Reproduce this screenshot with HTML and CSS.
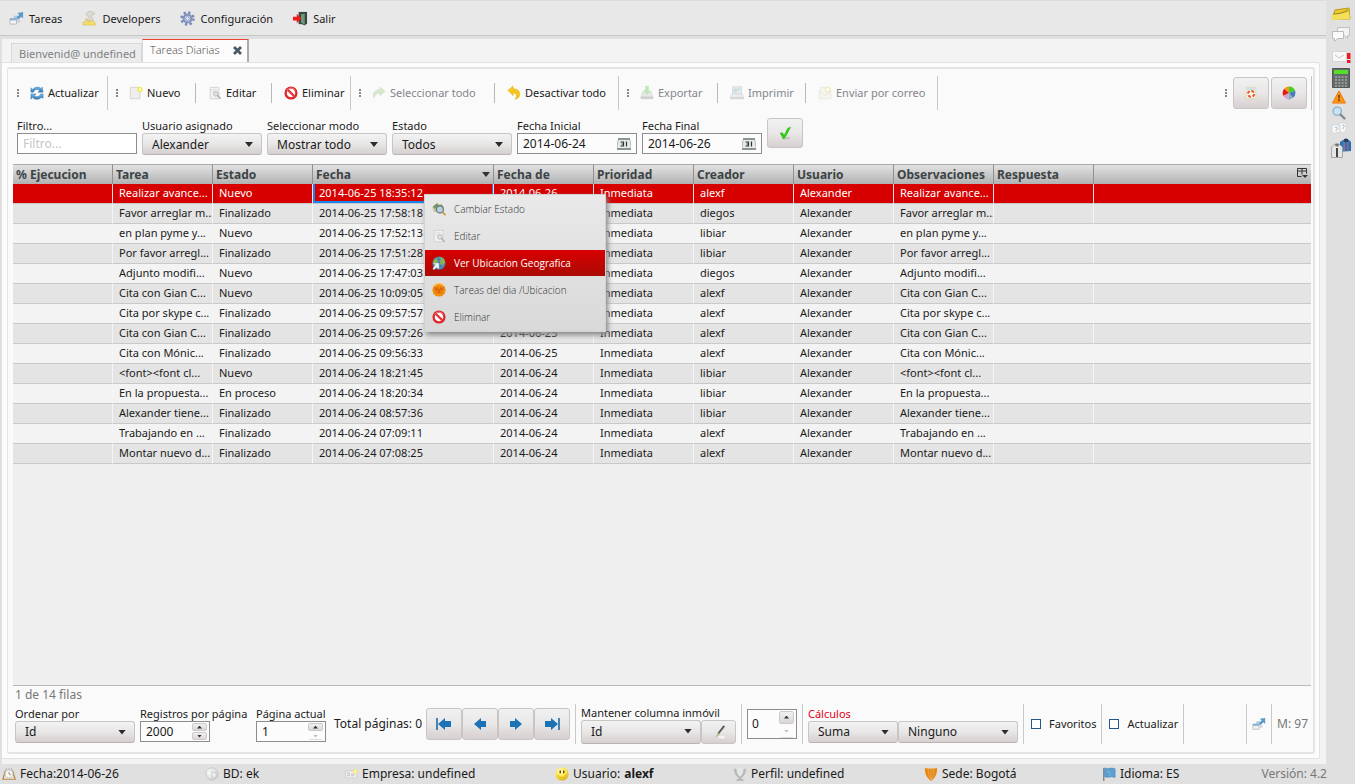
FILE: index.html
```html
<!DOCTYPE html>
<html lang="es">
<head>
<meta charset="utf-8">
<title>Tareas Diarias</title>
<link rel="stylesheet" href="styles.css">
</head>
<body>
<svg class="sprite" aria-hidden="true">
  <defs>
    <linearGradient id="g-blue" x1="0" y1="0" x2="0" y2="1"><stop offset="0" stop-color="#7db9e2"/><stop offset="1" stop-color="#2c76b4"/></linearGradient>
    <linearGradient id="g-gray" x1="0" y1="0" x2="1" y2="1"><stop offset="0" stop-color="#fff"/><stop offset="1" stop-color="#c2c2c2"/></linearGradient>
    <linearGradient id="g-coat" x1="0" y1="0" x2="1" y2="0"><stop offset="0" stop-color="#2b5f97"/><stop offset=".5" stop-color="#4f93cf"/><stop offset="1" stop-color="#2b62a0"/></linearGradient>
    <radialGradient id="g-smile" cx=".4" cy=".3" r=".8"><stop offset="0" stop-color="#fffbd0"/><stop offset=".5" stop-color="#ffe640"/><stop offset="1" stop-color="#c9a216"/></radialGradient>
  </defs>
  <symbol id="task" viewBox="0 0 16 16"><path d="M5 5h5v5H5z" fill="#aacbe4"/><path d="M1 8h7v6H1z" fill="#f0f2f4" stroke="#b5bdc4"/><path d="M1 8h7v2H1z" fill="#89aecb"/><path d="M15 1v7l-2-2-3 3-2-2 3-3-2-2z" fill="#5a9acb"/><path d="M9 11l3-2v2l-3 2z" fill="#c4ccd2"/></symbol>
  <symbol id="dev" viewBox="0 0 16 16"><path d="M7 0l5 1 2 2-3 1-1 2 2 3-2 3-4-1 2-3-2-3-2-1z" fill="#dcdad1" stroke="#b8b4a4" stroke-width=".6"/><path d="M1 12l4-2 8 1 2 4H1z" fill="#f3dd6c" stroke="#d3b63c" stroke-width=".5"/><path d="M4 8l4 4" stroke="#d9ca86" stroke-width="2"/></symbol>
  <symbol id="gear" viewBox="0 0 16 16"><circle cx="8" cy="8" r="6.4" fill="none" stroke="#7788b4" stroke-width="2.6" stroke-dasharray="2.5 2.53"/><circle cx="8" cy="8" r="4.2" fill="#cfd8ee" stroke="#8292bd" stroke-width="2.4"/><circle cx="8" cy="8" r="1.8" fill="#f1f3f8" stroke="#7181aa" stroke-width=".7"/></symbol>
  <symbol id="exit" viewBox="0 0 16 16"><path d="M6 1h9v13H6z" fill="#404642"/><path d="M8 3l5-1v13l-5-2z" fill="#709779" stroke="#253a2b" stroke-width=".8"/><path d="M0 6h4V3l5 5-5 5v-3H0z" fill="#ee1b20"/></symbol>
  <symbol id="refresh" viewBox="0 0 16 16"><path d="M1 7V2l2 2c3-4 8-3 10-1l1-2 1 6H9l2-2C8 3 5 4 4 7z" fill="url(#g-blue)" stroke="#397fb5" stroke-width=".5"/><path d="M15 9v5l-2-1c-3 3-8 3-10 0l-2 2V9h6l-2 2c3 2 6 1 7-2z" fill="url(#g-blue)" stroke="#397fb5" stroke-width=".5"/></symbol>
  <symbol id="new" viewBox="0 0 16 16"><path d="M1.500 1.500h11v13h-11z" fill="#eeeeec" stroke="#d2d2d0"/><circle cx="12.500" cy="4" r="2.200" fill="#fff" stroke="#f0ea55" stroke-width="1.800"/></symbol>
  <symbol id="edit" viewBox="0 0 16 16"><path d="M2.500 1.500h10v13h-10z" fill="#f2f2f2" stroke="#d0d0d0"/><path d="M4 4h6M4 6h6" stroke="#ddd"/><circle cx="9" cy="9" r="2.600" fill="#e2e2e2" stroke="#b4b4b4"/><path d="M10.500 10.500l4 4" stroke="#b0b0b0" stroke-width="1.800"/></symbol>
  <symbol id="ban" viewBox="0 0 16 16"><circle cx="8" cy="8" r="6.200" fill="#fff" stroke="#dd252a" stroke-width="2.600"/><path d="M3.800 3.800l8.400 8.400" stroke="#e43a3c" stroke-width="2.600"/><path d="M3 5a6 6 0 0 1 10 0" fill="none" stroke="#ff9999" stroke-width=".8"/></symbol>
  <symbol id="redo" viewBox="0 0 16 16"><path d="M2 14C0 8 4 4 9 4V1l6 5-6 5V8C6 8 3 10 2 14z" fill="#d6e6cb" stroke="#cbdac0" stroke-width=".5"/></symbol>
  <symbol id="undo" viewBox="0 0 16 16"><path d="M1 5l6-5v3c6 0 9 4 7 9-1 2-3 3-5 3 3-3 2-7-2-7v3z" fill="#f5c71b" stroke="#d9a514" stroke-width=".5"/></symbol>
  <symbol id="export" viewBox="0 0 16 16"><path d="M3 7h10l2 7H1z" fill="#e8e8e8" stroke="#d0d0d0" stroke-width=".6"/><path d="M1 12h14v3H1z" fill="#cfcfcf"/><path d="M6 0h4v5h3l-5 5-5-5h3z" fill="#c0e5ba"/></symbol>
  <symbol id="print" viewBox="0 0 16 16"><path d="M3 1h10v8H3z" fill="#eef1f3" stroke="#cdd5da"/><circle cx="6" cy="5" r="2.500" fill="#cddbe5"/><path d="M8 2h4v4H8z" fill="#d9e2e8"/><path d="M2 9h12l2 4H0z" fill="#ececec" stroke="#d2d2d2" stroke-width=".6"/><path d="M0 13h16v2H0z" fill="#d4d4d4"/></symbol>
  <symbol id="mail" viewBox="0 0 16 16"><path d="M1.500 5.500l2-4h8l3 3v10h-13z" fill="#f5f5ee" stroke="#e6e6de"/><path d="M2 6l6 5 6-5" fill="none" stroke="#e5e5e1"/><circle cx="11" cy="4" r="2.500" fill="#fff" stroke="#f2edb8" stroke-width="1.500"/></symbol>
  <symbol id="first" viewBox="0 0 18 16"><path d="M2 2v12" stroke="#1f6ba8" stroke-width="1.600"/><path d="M3 8l7-6v3h6v6h-6v3z" fill="#1b73b5"/></symbol>
  <symbol id="prev" viewBox="0 0 18 16"><path d="M3 8l7-6v3h5v6h-5v3z" fill="#1b73b5"/></symbol>
  <symbol id="cal" viewBox="0 0 14 12"><path d="M1 1h12v7l1 3H0l1-3z" fill="#e9ebeb"/><path d="M1 0h12v2H1zM0 10h14v2H0z" fill="#8c9596"/><path d="M0 10l1-8M14 10l-1-8" stroke="#a3a9aa" stroke-width=".8"/><path d="M3.500 4h3v4h-3M4.500 6h2M9.500 3.500v5" fill="none" stroke="#333" stroke-width="1.200"/></symbol>
  <symbol id="check" viewBox="0 0 16 16"><ellipse cx="9" cy="14" rx="5" ry="1.500" fill="#c6c3c3"/><path d="M2 8l3-1 2 3 4-8 4-1-7 13-2 1z" fill="#38c71d"/></symbol>
  <symbol id="sheet" viewBox="0 0 16 16"><path d="M2.500 1.500h11v13h-11z" fill="#faf7dc" stroke="#d9d6b9"/><path d="M3 2h10v3H3z" fill="#cee3e6"/><circle cx="8" cy="9" r="3.500" fill="none" stroke="#e25a42" stroke-width="2.400" stroke-dasharray="3.500 2"/></symbol>
  <symbol id="pie" viewBox="0 0 16 16"><path d="M8 8L2.500 3A7.500 7.500 0 0 1 8 .5z" fill="#f49b14"/><path d="M8 8V.5a7.500 7.500 0 0 1 7 5z" fill="#46cf29"/><path d="M8 8l7-2.500a7.500 7.500 0 0 1-2.500 8z" fill="#407fbc"/><path d="M8 8l4.500 5.500A7.500 7.500 0 0 1 7 15.500z" fill="#85a9cf"/><path d="M8 8l-1 7.500A7.500 7.500 0 0 1 1.500 11z" fill="#d6a5cc"/><path d="M8 8l-6.500 3A7.500 7.500 0 0 1 2.500 3z" fill="#e01f1b"/></symbol>
  <symbol id="find" viewBox="0 0 16 16"><path d="M0 6l5-4 7 1 2 5-6 4-6-1z" fill="#cfc7a5"/><path d="M1 5l5-4 2 3-5 4z" fill="#74996b"/><path d="M4 10l7-7" stroke="#b2a77c" stroke-width="2"/><circle cx="9" cy="8.500" r="4" fill="#b8d0de" stroke="#62717a" stroke-width="1.300"/><path d="M12 11.500l3.500 3.500" stroke="#c99b49" stroke-width="2"/></symbol>
  <symbol id="globe" viewBox="0 0 16 16"><circle cx="8" cy="8" r="7.500" fill="#4a85b9"/><path d="M8 1c4 0 7 3 7 6l-3 4-3-3 1-4zM1 6l4-4 2 4-3 5-2-1z" fill="#8fb14b"/><path d="M1 14l3-4-3-2h7v7l-3-2-3 3z" fill="#eef7fa" stroke="#8caab8" stroke-width=".6"/></symbol>
  <symbol id="foursq" viewBox="0 0 16 16"><circle cx="8" cy="8" r="7.500" fill="#f28a0b"/><path d="M3 5l2 4 1-4 2 5 2-5 1 4 2-4M5 11h6" fill="none" stroke="#d45409"/><path d="M2 4a7 7 0 0 1 12 0" fill="none" stroke="#ffc35a" stroke-width="1.500"/></symbol>
  <symbol id="pen" viewBox="0 0 16 16"><ellipse cx="11" cy="14" rx="4" ry="1.500" fill="#f3f3f3"/><path d="M14 1L7 10" stroke="#555c50" stroke-width="2.200"/><path d="M7 9l2 1.500L3 15z" fill="#a8bf85"/></symbol>
  <symbol id="cols" viewBox="0 0 11 11"><path d="M4.500 8.500h-4v-8h9v5M.5 3h9M5 .5v6" fill="none" stroke="#333"/><path d="M5 7h6l-3 3z" fill="#333"/></symbol>
  <symbol id="clock" viewBox="0 0 16 16"><path d="M4 4L1 14h14L12 4" fill="#eee8df" stroke="#b98743" stroke-width="1.400"/><circle cx="8" cy="8" r="4.500" fill="#f8f8f6" stroke="#c5c5c5"/><path d="M8 6v2l2 1" fill="none" stroke="#777"/><path d="M5 1v3M8 1v2M11 1v3" stroke="#b8bec0" stroke-width="1.500"/></symbol>
  <symbol id="disc" viewBox="0 0 16 16"><circle cx="8" cy="8" r="7" fill="url(#g-gray)" stroke="#c4c4c4"/><circle cx="10" cy="9" r="3" fill="#ededed" stroke="#c9c9c9"/><path d="M2 4l5 3-1 6" fill="#fff" opacity=".6"/></symbol>
  <symbol id="card" viewBox="0 0 16 16"><path d="M1.500 4.500h13v8h-13z" fill="#f3f3f2" stroke="#ccc"/><path d="M3 7h3v3H3M8 8h4M8 10h4" fill="none" stroke="#b5b5b5"/><circle cx="13" cy="5" r="2" fill="#fffcb0" stroke="#f2e640"/></symbol>
  <symbol id="smile" viewBox="0 0 16 16"><circle cx="8" cy="8" r="7.500" fill="url(#g-smile)"/><path d="M6 4v3M10 4v3" stroke="#463a13" stroke-width="1.500"/><path d="M3.500 9c2 4 7 4 9 0" fill="none" stroke="#d4a91f"/></symbol>
  <symbol id="shield" viewBox="0 0 16 16"><path d="M1 1c5 1 9 1 14 0 0 6-1 10-7 15C2 11 1 7 1 1z" fill="currentColor"/><path d="M5 2c0 5 0 8 3 12 3-4 3-7 3-12M8 2v13" fill="none" stroke="#fff" stroke-opacity=".25"/></symbol>
  <symbol id="urn" viewBox="0 0 16 16"><path d="M1 2h14c0 5-2 8-5 10v2h2v2H4v-2h2v-2C3 10 1 7 1 2z" fill="#b9b9b9"/><path d="M4 1h8c0 5-1 8-4 10C5 9 4 6 4 1z" fill="#e6e6e6"/></symbol>
  <symbol id="flag" viewBox="0 0 16 16"><path d="M2 1v15" stroke="#788a98" stroke-width="1.600"/><path d="M3 1c4 2 7-1 12 1v10c-5-2-8 1-12-1z" fill="#5d9fd1" stroke="#4383b5" stroke-width=".6"/><path d="M6 5l3 1v4" fill="none" stroke="#82bce3"/></symbol>
  <symbol id="folder" viewBox="0 0 20 14"><path d="M1 12L4 3l14-2 1 11z" fill="#e9c92e" stroke="#bd9b16"/><path d="M1 7l17-2 1 7-18 1z" fill="#f6df58"/><path d="M2 7c5 0 11-1 15-4" fill="none" stroke="#94832d"/></symbol>
  <symbol id="chat" viewBox="0 0 20 16"><path d="M6.500 1.500h12v8h-2v3l-3-3h-7z" fill="#f3f3f3" stroke="#c0c0c0"/><path d="M1.500 5.500h11v7h-6l-3 3v-3h-2z" fill="#fafafa" stroke="#bbb"/></symbol>
  <symbol id="alertmail" viewBox="0 0 20 14"><path d="M1.500 1.500h14v10h-14z" fill="#f8f8f6" stroke="#d5d5d3"/><path d="M4 5l4 3 5-3" fill="none" stroke="#c6c6c6"/><path d="M16 3h3.500v6H16zM16 10h3.500v3H16z" fill="#ed1c24"/></symbol>
  <symbol id="calc" viewBox="0 0 18 20"><path d="M.5.5h17v19H.5z" fill="#656b6a" stroke="#555"/><path d="M2 2h14v4H2z" fill="#52de29"/><path d="M3 9h12M3 12h12M3 15h12M3 18h12" stroke="#a2a8a6" stroke-width="1.500" stroke-dasharray="2 1.300"/></symbol>
  <symbol id="warn" viewBox="0 0 16 15"><path d="M8 1l7 13H1z" fill="#ff9518" stroke="#ed7708" stroke-linejoin="round"/><path d="M8 5v4M8 10v2" stroke="#513300" stroke-width="1.400"/></symbol>
  <symbol id="lens" viewBox="0 0 16 16"><circle cx="6" cy="6" r="4.800" fill="#c8e2f4" stroke="#8eb1cb" stroke-width="1.500"/><path d="M9 9l6 6" stroke="#818b92" stroke-width="2.500"/></symbol>
  <symbol id="ask" viewBox="0 0 16 14"><path d="M1 3h8v8l-3-1-3 2-2-3zM8 1h7v8l-4 2-3-3z" fill="#f8f8f8" stroke="#d0d0d0" stroke-width=".7"/><path d="M4 6c1-2 4 0 1 2v1M11 4c1-2 4 0 1 2v1" fill="none" stroke="#9bbdd5"/></symbol>
  <symbol id="people" viewBox="0 0 20 20"><path d="M9 14V4l3-2h6l2 2v9z" fill="url(#g-coat)"/><ellipse cx="15" cy="2.500" rx="2.500" ry="2" fill="#27405f"/><path d="M14 5h2v8h-2z" fill="#85517a"/><path d="M.5 19.500V9L4 6h4l3.500 3v10.500z" fill="#e5e5e5" stroke="#999" stroke-width=".8"/><path d="M5 10h2v9H5z" fill="#444"/><ellipse cx="6" cy="7" rx="2" ry="1.600" fill="#777"/></symbol>
</svg>

<div class="app">
  <div class="main">
    <nav class="menubar">
      <button class="menu"><svg class="icon"><use href="#task"/></svg>Tareas</button>
      <button class="menu"><svg class="icon"><use href="#dev"/></svg>Developers</button>
      <button class="menu"><svg class="icon"><use href="#gear"/></svg>Configuración</button>
      <button class="menu"><svg class="icon"><use href="#exit"/></svg>Salir</button>
    </nav>
    <div class="workspace">
      <div class="tabs">
        <button class="tab">Bienvenid@ undefined</button>
        <div class="tab tab-active"><span>Tareas Diarias</span><button class="close" aria-label="Cerrar"><svg viewBox="0 0 9 9"><path d="M1 1l7 7M8 1l-7 7" stroke="#4c5a66" stroke-width="2.800"/></svg></button></div>
      </div>
      <div class="panel"><div class="panel-inner">
        <div class="toolbar">
          <div class="tool tall"><i class="grip"></i><button><svg class="icon"><use href="#refresh"/></svg>Actualizar</button></div>
          <div class="tool"><i class="grip"></i><button><svg class="icon"><use href="#new"/></svg>Nuevo</button></div>
          <div class="tool"><button><svg class="icon"><use href="#edit"/></svg>Editar</button></div>
          <div class="tool tall"><button><svg class="icon"><use href="#ban"/></svg>Eliminar</button></div>
          <div class="tool"><i class="grip"></i><button disabled><svg class="icon"><use href="#redo"/></svg>Seleccionar todo</button></div>
          <div class="tool tall"><button><svg class="icon"><use href="#undo"/></svg>Desactivar todo</button></div>
          <div class="tool"><i class="grip"></i><button disabled><svg class="icon"><use href="#export"/></svg>Exportar</button></div>
          <div class="tool"><button disabled><svg class="icon"><use href="#print"/></svg>Imprimir</button></div>
          <div class="tool tall"><button disabled><svg class="icon"><use href="#mail"/></svg>Enviar por correo</button></div>
          <div class="tool tall tool-end"><i class="grip"></i><button class="push" aria-label="Hoja"><svg class="icon"><use href="#sheet"/></svg></button><button class="push" aria-label="Gráfico"><svg class="icon"><use href="#pie"/></svg></button></div>
        </div>
        <div class="filters">
          <label class="field">Filtro...<input class="box" type="text" placeholder="Filtro..."></label>
          <label class="field">Usuario asignado<span class="pick"><select><option>Alexander</option></select></span></label>
          <label class="field">Seleccionar modo<span class="pick"><select><option>Mostrar todo</option></select></span></label>
          <label class="field">Estado<span class="pick"><select><option>Todos</option></select></span></label>
          <label class="field">Fecha Inicial<span class="box date"><input type="text" value="2014-06-24"><svg><use href="#cal"/></svg></span></label>
          <label class="field">Fecha Final<span class="box date"><input type="text" value="2014-06-26"><svg><use href="#cal"/></svg></span></label>
          <button class="push apply" aria-label="Aplicar"><svg class="icon"><use href="#check"/></svg></button>
        </div>
        <div class="grid">
          <table>
            <colgroup><col class="c"><col class="c"><col class="c"><col class="c-wide"><col class="c"><col class="c"><col class="c"><col class="c"><col class="c"><col class="c"><col></colgroup>
            <thead><tr><th>% Ejecucion</th><th>Tarea</th><th>Estado</th><th><span class="sorted">Fecha</span></th><th>Fecha de</th><th>Prioridad</th><th>Creador</th><th>Usuario</th><th>Observaciones</th><th>Respuesta</th><th><button class="columns" aria-label="Columnas"><svg><use href="#cols"/></svg></button></th></tr></thead>
            <tbody>
              <tr class="selected"><td></td><td>Realizar avance...</td><td>Nuevo</td><td class="focus">2014-06-25 18:35:12</td><td>2014-06-26</td><td>Inmediata</td><td>alexf</td><td>Alexander</td><td>Realizar avance...</td><td></td><td></td></tr>
              <tr><td></td><td>Favor arreglar m...</td><td>Finalizado</td><td>2014-06-25 17:58:18</td><td>2014-06-25</td><td>Inmediata</td><td>diegos</td><td>Alexander</td><td>Favor arreglar m...</td><td></td><td></td></tr>
              <tr><td></td><td>en plan pyme y...</td><td>Nuevo</td><td>2014-06-25 17:52:13</td><td>2014-06-25</td><td>Inmediata</td><td>libiar</td><td>Alexander</td><td>en plan pyme y...</td><td></td><td></td></tr>
              <tr><td></td><td>Por favor arregl...</td><td>Finalizado</td><td>2014-06-25 17:51:28</td><td>2014-06-25</td><td>Inmediata</td><td>libiar</td><td>Alexander</td><td>Por favor arregl...</td><td></td><td></td></tr>
              <tr><td></td><td>Adjunto modifi...</td><td>Nuevo</td><td>2014-06-25 17:47:03</td><td>2014-06-25</td><td>Inmediata</td><td>diegos</td><td>Alexander</td><td>Adjunto modifi...</td><td></td><td></td></tr>
              <tr><td></td><td>Cita con Gian C...</td><td>Nuevo</td><td>2014-06-25 10:09:05</td><td>2014-06-25</td><td>Inmediata</td><td>alexf</td><td>Alexander</td><td>Cita con Gian C...</td><td></td><td></td></tr>
              <tr><td></td><td>Cita por skype c...</td><td>Finalizado</td><td>2014-06-25 09:57:57</td><td>2014-06-25</td><td>Inmediata</td><td>alexf</td><td>Alexander</td><td>Cita por skype c...</td><td></td><td></td></tr>
              <tr><td></td><td>Cita con Gian C...</td><td>Finalizado</td><td>2014-06-25 09:57:26</td><td>2014-06-25</td><td>Inmediata</td><td>alexf</td><td>Alexander</td><td>Cita con Gian C...</td><td></td><td></td></tr>
              <tr><td></td><td>Cita con Mónic...</td><td>Finalizado</td><td>2014-06-25 09:56:33</td><td>2014-06-25</td><td>Inmediata</td><td>alexf</td><td>Alexander</td><td>Cita con Mónic...</td><td></td><td></td></tr>
              <tr><td></td><td>&lt;font&gt;&lt;font cl...</td><td>Nuevo</td><td>2014-06-24 18:21:45</td><td>2014-06-24</td><td>Inmediata</td><td>libiar</td><td>Alexander</td><td>&lt;font&gt;&lt;font cl...</td><td></td><td></td></tr>
              <tr><td></td><td>En la propuesta...</td><td>En proceso</td><td>2014-06-24 18:20:34</td><td>2014-06-24</td><td>Inmediata</td><td>libiar</td><td>Alexander</td><td>En la propuesta...</td><td></td><td></td></tr>
              <tr><td></td><td>Alexander tiene...</td><td>Finalizado</td><td>2014-06-24 08:57:36</td><td>2014-06-24</td><td>Inmediata</td><td>libiar</td><td>Alexander</td><td>Alexander tiene...</td><td></td><td></td></tr>
              <tr><td></td><td>Trabajando en ...</td><td>Finalizado</td><td>2014-06-24 07:09:11</td><td>2014-06-24</td><td>Inmediata</td><td>alexf</td><td>Alexander</td><td>Trabajando en ...</td><td></td><td></td></tr>
              <tr><td></td><td>Montar nuevo d...</td><td>Finalizado</td><td>2014-06-24 07:08:25</td><td>2014-06-24</td><td>Inmediata</td><td>alexf</td><td>Alexander</td><td>Montar nuevo d...</td><td></td><td></td></tr>
            </tbody>
          </table>
          <div class="context" role="menu">
            <button role="menuitem"><svg class="icon"><use href="#find"/></svg>Cambiar Estado</button>
            <button role="menuitem"><svg class="icon"><use href="#edit"/></svg>Editar</button>
            <button role="menuitem" class="hot"><svg class="icon"><use href="#globe"/></svg>Ver Ubicacion Geografica</button>
            <button role="menuitem"><svg class="icon"><use href="#foursq"/></svg>Tareas del dia /Ubicacion</button>
            <button role="menuitem"><svg class="icon"><use href="#ban"/></svg>Eliminar</button>
          </div>
        </div>
        <div class="count">1 de 14 filas</div>
        <div class="pager">
          <label class="field w-pick">Ordenar por<span class="pick"><select><option>Id</option></select></span></label>
          <div class="field w-size"><label for="size">Registros por página</label><span class="box spin"><input id="size" type="number" value="2000"><span class="steps"><button class="up" aria-label="Más"></button><button class="down" aria-label="Menos"></button></span></span></div>
          <div class="field w-page"><label for="page">Página actual</label><span class="box spin"><input id="page" type="number" value="1"><span class="steps"><button class="up" aria-label="Más"></button><button class="down" disabled aria-label="Menos"></button></span></span></div>
          <span class="total">Total páginas: 0</span>
          <div class="nav">
            <button class="push" aria-label="Primera"><svg><use href="#first"/></svg></button>
            <button class="push" aria-label="Anterior"><svg><use href="#prev"/></svg></button>
            <button class="push" aria-label="Siguiente"><svg class="flip"><use href="#prev"/></svg></button>
            <button class="push" aria-label="Última"><svg class="flip"><use href="#first"/></svg></button>
          </div>
          <div class="group"><div class="field"><label for="keep">Mantener columna inmóvil</label><div class="pair"><span class="pick tallpick"><select id="keep"><option>Id</option></select></span><button class="push brush" aria-label="Aplicar columna"><svg class="icon"><use href="#pen"/></svg></button></div></div></div>
          <div class="group"><span class="box spin bigspin"><input type="number" value="0" aria-label="Columnas"><span class="steps"><button class="up" aria-label="Más"></button><button class="down" disabled aria-label="Menos"></button></span></span></div>
          <div class="group"><div class="field"><label class="red" for="op">Cálculos</label><div class="pair"><span class="pick short"><select id="op"><option>Suma</option></select></span><span class="pick"><select aria-label="Columna"><option>Ninguno</option></select></span></div></div></div>
          <div class="group"><label class="tick"><input type="checkbox">Favoritos</label></div>
          <div class="group"><label class="tick"><input type="checkbox">Actualizar</label></div>
          <div class="group grow"></div>
          <div class="group"><svg class="icon"><use href="#task"/></svg></div>
          <div class="group mem">M: 97</div>
        </div>
      </div></div>
    </div>
  </div>
  <aside class="side">
    <svg class="s14"><use href="#folder"/></svg>
    <svg class="s16"><use href="#chat"/></svg>
    <svg class="s14 gap"><use href="#alertmail"/></svg>
    <svg class="s20"><use href="#calc"/></svg>
    <svg class="s14 narrow"><use href="#warn"/></svg>
    <svg class="s14 narrow"><use href="#lens"/></svg>
    <svg class="s14 narrow"><use href="#ask"/></svg>
    <svg class="s20"><use href="#people"/></svg>
  </aside>
</div>
<footer class="status">
  <span><svg class="icon"><use href="#clock"/></svg>Fecha:2014-06-26</span>
  <span><svg class="icon"><use href="#disc"/></svg>BD: ek</span>
  <span><svg class="icon"><use href="#card"/></svg>Empresa: undefined</span>
  <span><svg class="icon"><use href="#smile"/></svg>Usuario: <b>alexf</b></span>
  <span><svg class="icon"><use href="#urn"/></svg>Perfil: undefined</span>
  <span><svg class="icon gold"><use href="#shield"/></svg>Sede: Bogotá</span>
  <span><svg class="icon"><use href="#flag"/></svg>Idioma: ES</span>
  <span class="version">Versión: 4.2</span>
</footer>
</body>
</html>
```
FILE: styles.css
```css
* { box-sizing: border-box; }
body {
  margin: 0;
  min-height: 100vh;
  display: flex;
  flex-direction: column;
  background: #e0e0e0;
  color: #1a1a1a;
  font: 12px/16px "Noto Sans", "Open Sans", sans-serif;
}
button, input, select { font: inherit; color: inherit; margin: 0; }
button { background: none; border: 0; padding: 0; }
.sprite { position: absolute; width: 0; height: 0; }
.icon { width: 14px; height: 14px; flex: none; }

.app { flex: 1; display: flex; }
.main { flex: 1; min-width: 0; display: flex; flex-direction: column; }
.menubar {
  height: 36px;
  display: flex;
  align-items: center;
  gap: 20px;
  padding: 1px 9px 0;
  background: #e8e8e8;
  border-top: 1px solid #dcdcdc;
  border-bottom: 1px solid #c6c6c6;
  font-size: 11px;
}
.menu { display: flex; align-items: center; gap: 5px; }
.menu .icon { width: 15px; height: 15px; }

.workspace {
  flex: 1;
  margin: 3px 0 0 2px;
  padding-right: 6px;
  padding-bottom: 5px;
  background: #f3f3f3;
  display: flex;
  flex-direction: column;
}
.tabs { display: flex; align-items: flex-end; height: 23px; padding-left: 9px; }
.tab { height: 19px; padding: 2px 0 0 7px; width: 131px; background: #ececec; border: 1px solid #d8d8d8; border-bottom: 0; color: #7d8287; text-align: left; white-space: nowrap; font-size: 11px; line-height: 16px; }
.tab-active { display: flex; justify-content: space-between; align-items: center; width: 107px; height: 23px; padding: 0 5px 2px 7px; background: #fcfcfc; border-top: 1px solid #ee4030; border-right: 2px solid #aaa; font: 300 11px/16px "Open Sans", sans-serif; color: #444; }
.close { width: 9px; height: 9px; display: flex; }

.panel { flex: 1; display: flex; background: #fcfcfc; border: 1px solid #e2e2e2; border-left: 0; border-radius: 0 3px 3px 0; padding: 4px 4px 4px 5px; }
.panel-inner { flex: 1; min-width: 0; display: flex; flex-direction: column; background: #fafafa; border: 2px solid #e4e4e4; border-left-width: 1px; border-radius: 3px; padding: 7px 1px 7px 5px; }

.toolbar { display: grid; grid-template-columns: 95px 88px 76px 79px 144px 124px 99px 88px 132px 1fr; height: 34px; font-size: 11px; }
.tool { display: flex; align-items: center; position: relative; }
.tool::after { content: ""; position: absolute; right: 0; top: 7px; bottom: 7px; width: 1px; background: #b8b8b8; }
.tall::after { top: 0; bottom: 0; background: #c8c8c8; }
.tool button { display: flex; align-items: center; gap: 4px; padding-left: 12px; white-space: nowrap; }
.tool .grip + button { padding-left: 11px; }
.tool button:disabled { color: #85858c; }
.grip { width: 2px; height: 8px; margin-left: 8px; background: repeating-linear-gradient(#888 0 2px, transparent 2px 3px); }
.tool:first-child .grip { margin-left: 4px; }
.tool-end { justify-content: flex-end; padding-right: 5px; gap: 2px; }
.push { display: flex; align-items: center; justify-content: center; width: 36px; height: 32px; border: 1px solid #c8c5c5; border-radius: 3px; background: linear-gradient(#f1f1f1, #e9e7e7 50%, #d7cfcf); }
.tool .push, .tool .grip + .push { justify-content: center; padding: 0; }
.tool-end .grip { margin-right: 4px; }

.filters { display: flex; gap: 5px; padding: 8px 4px 9px; height: 54px; }
.field { display: flex; flex-direction: column; white-space: nowrap; font-size: 11px; line-height: 15px; }
.filters .field { width: 120px; }
.box { height: 21px; width: 100%; border: 1px solid #8d8d8d; background: #fff; padding: 0 5px; font-size: 12px; }
.box::placeholder { color: #c6c6c6; }
.date, .spin { display: flex; align-items: center; background: #fcfcfc; }
.box input { border: 0; padding: 0; min-width: 0; flex: 1; background: none; outline: 0; }
.date svg { width: 14px; height: 12px; }
.pick { display: block; position: relative; width: 120px; height: 22px; font-size: 12px; }
.pick select { appearance: none; width: 100%; height: 100%; padding: 0 9px; border: 1px solid #c8c5c5; border-bottom-color: #b9b4b4; border-radius: 3px; background: linear-gradient(#f3f3f3, #e8e6e6 50%, #d6cfcf); }
.pick::after { content: ""; position: absolute; right: 9px; top: 9px; width: 8px; height: 5px; background: #2b2b2b; clip-path: polygon(0 0, 100% 0, 50% 100%); }
.apply { height: 30px; }

.grid { flex: 1; position: relative; background: #efefef; border-bottom: 1px solid #b9b9b9; margin-right: 1px; }
table { width: 100%; border-collapse: separate; border-spacing: 0; table-layout: fixed; }
.c { width: 100px; }
.c-wide { width: 181px; }
th { height: 20px; padding: 0 3px; text-align: left; color: #3c4446; line-height: 18px; white-space: nowrap; background: linear-gradient(#e2e2e2, #b2b2b2); border-top: 1px solid #aaa; border-right: 1px solid #8f8f8f; }
th:last-child { border-right: 0; text-align: right; }
.sorted { display: flex; justify-content: space-between; align-items: center; }
.sorted::after { content: ""; width: 8px; height: 5px; background: #333; clip-path: polygon(0 0, 100% 0, 50% 100%); }
.columns svg { width: 11px; height: 11px; display: block; }
td { height: 20px; padding: 0 0 1px 6px; font-size: 11px; line-height: 18px; white-space: nowrap; overflow: hidden; border-right: 1px solid #f5f5f5; border-bottom: 1px solid #c9c9c9; background: #f3f3f3; }
tr:nth-child(even) td { background: #e4e4e4; }
td:last-child { border-right: 0; }
tr.selected td { background: #d60000; color: #fff; border-right-color: #f2dede; }
td.focus { box-shadow: inset 2px 0 #1683f0, inset -1px 0 #1683f0, inset 0 -2px #1683f0; }
.context { position: absolute; left: 411px; top: 30px; width: 182px; height: 138px; padding: 1px 0; background: linear-gradient(#e9e9e9, #d9d9d9); border: 1px solid #d2d2d2; box-shadow: 2px 3px 5px #888; display: flex; flex-direction: column; font: 300 10px/14px "Open Sans", sans-serif; }
.context button { flex: 1; display: flex; align-items: center; gap: 8px; padding-left: 7px; white-space: nowrap; color: #333; text-align: left; }
.context .hot { background: linear-gradient(#d90000, #a90b05); color: #fff; font-weight: 400; }

.count { padding: 1px 2px 0; color: #777; line-height: 16px; }
.pager { display: flex; align-items: center; height: 42px; padding-left: 2px; }
.w-pick { width: 125px; }
.w-size { width: 116px; }
.w-page { width: 78px; }
.spin { width: 70px; padding-right: 2px; }
input[type="number"] { appearance: textfield; }
.steps { display: flex; flex-direction: column; gap: 1px; }
.steps button { width: 15px; height: 8px; border: 1px solid #cfcaca; border-radius: 2px; background: linear-gradient(#f0f0f0, #dcd6d6); display: flex; align-items: center; justify-content: center; }
.steps button::before { content: ""; width: 5px; height: 3px; background: #333; clip-path: polygon(0 100%, 100% 100%, 50% 0); }
.steps .down::before { clip-path: polygon(0 0, 100% 0, 50% 100%); }
.steps button:disabled { border-color: transparent transparent #ddd; background: none; }
.steps button:disabled::before { background: #bbb; }
.total { width: 92px; white-space: nowrap; }
.nav { display: flex; padding-right: 5px; }
.nav svg { width: 18px; height: 16px; }
.flip { transform: scaleX(-1); }
.group { height: 40px; display: flex; align-items: center; padding: 0 5px; border-left: 1px solid #c9c9c9; white-space: nowrap; }
.pair { display: flex; }
.brush { width: 35px; height: 24px; }
.tallpick { height: 24px; }
.bigspin { width: 50px; height: 30px; padding-left: 4px; }
.bigspin .steps button { height: 13px; }
.short { width: 90px; }
.red { color: #e50019; }
.tick { display: flex; align-items: center; gap: 8px; padding-left: 2px; font-size: 11px; }
.tick input { appearance: none; width: 10px; height: 10px; border: 1px solid #24588a; background: #fff; }
.grow { flex: 1; }
.mem { color: #777; padding-right: 4px; }

.side { width: 29px; display: flex; flex-direction: column; align-items: flex-start; padding: 7px 3px 0 5px; gap: 2px; }
.side svg { width: 20px; flex: none; }
.side .narrow { width: 16px; }
.s14 { height: 14px; }
.s16 { height: 16px; margin-top: 3px; }
.s20 { height: 20px; }
.gap { margin: 6px 0 2px; }

.status { height: 20px; display: grid; grid-template-columns: 203fr 139fr 211fr 178fr 191fr 178fr 159fr 66fr; padding-right: 28px; padding-left: 2px; align-items: center; }
.status span { display: flex; align-items: center; gap: 4px; white-space: nowrap; }
.status .version { color: #777; justify-content: flex-end; }
.gold { color: #e58a14; }
```
